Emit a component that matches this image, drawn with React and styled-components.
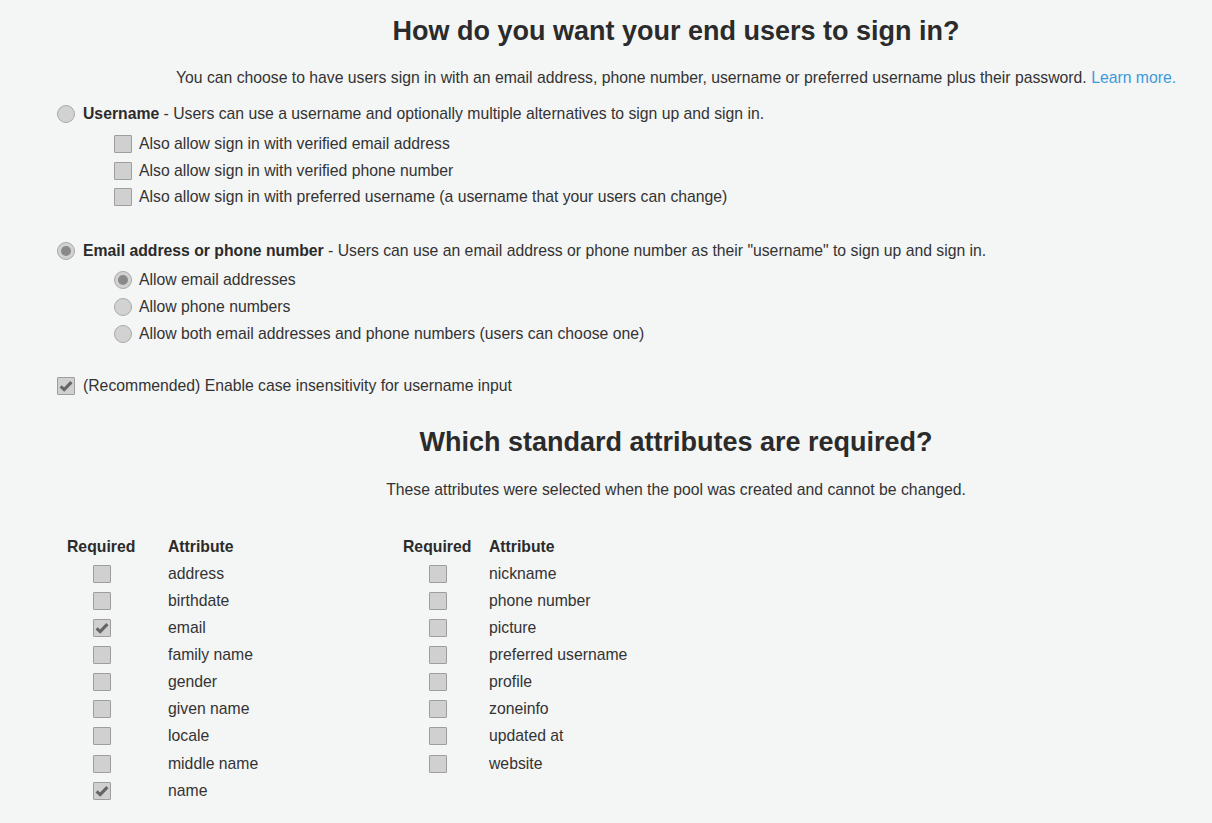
import React from "react";
import styled, { createGlobalStyle } from "styled-components";

const Global = createGlobalStyle`
  html, body { margin: 0; padding: 0; background: #f4f5f5; }
  body {
    font-family: "Liberation Sans", Arial, sans-serif;
    font-size: 15.75px;
    color: #333;
  }
`;

const Page = styled.div`
  padding-left: 57px;
  padding-bottom: 20px;
`;

const Centered = styled.div`
  padding-left: 83px;
  text-align: center;
`;

const Title = styled.h2`
  margin: ${(p) => p.$top}px 0 0;
  font-size: 27px;
  line-height: 30px;
  font-weight: bold;
  color: #2b2b2b;
`;

const Lead = styled.p`
  margin: ${(p) => p.$top}px 0 0;
  line-height: 20px;
  color: #333;
`;

const Link = styled.a`
  color: #3b9bdb;
  text-decoration: none;
`;

const OptionRow = styled.label`
  display: flex;
  align-items: center;
  gap: ${(p) => (p.$sub ? 7 : 8)}px;
  height: ${(p) => p.$h || 20}px;
  margin-top: ${(p) => p.$top || 0}px;
  padding-left: ${(p) => (p.$sub ? 57 : 0)}px;
  line-height: 20px;
  white-space: nowrap;
`;

const Strong = styled.b`
  font-weight: bold;
  color: #2b2b2b;
`;

const RadioBox = styled.span`
  width: 18px;
  height: 18px;
  flex: none;
  box-sizing: border-box;
  border-radius: 50%;
  background: #d2d2d2;
  border: 1px solid #a9a9a9;
  display: inline-flex;
  align-items: center;
  justify-content: center;
`;

const RadioDot = styled.span`
  width: 10px;
  height: 10px;
  border-radius: 50%;
  background: #898989;
`;

const CheckBox = styled.span`
  width: 18px;
  height: 18px;
  flex: none;
  box-sizing: border-box;
  background: #d0d0d0;
  border: 1px solid #9e9e9e;
  border-radius: 1px;
  display: inline-flex;
  align-items: center;
  justify-content: center;
`;

const Radio = ({ checked }) => (
  <RadioBox>{checked && <RadioDot />}</RadioBox>
);

const Check = ({ checked }) => (
  <CheckBox>
    {checked && (
      <svg width="16" height="16" viewBox="0 0 16 16">
        <path
          d="M2.6 8.4 L6.2 11.6 L13.4 4.2"
          fill="none"
          stroke="#666"
          strokeWidth="3.2"
          strokeLinejoin="miter"
        />
      </svg>
    )}
  </CheckBox>
);

const Tables = styled.div`
  display: flex;
  margin-top: 33px;
`;

const AttrTable = styled.div`
  display: grid;
  grid-template-columns: 69px ${(p) => p.$attrWidth}px;
  column-gap: ${(p) => p.$gap}px;
  grid-auto-rows: 27.125px;
  align-items: center;
  margin-left: ${(p) => p.$left}px;
`;

const HeadCell = styled.div`
  font-weight: bold;
  color: #2b2b2b;
  white-space: nowrap;
`;

const BoxCell = styled.div`
  display: flex;
  justify-content: center;
`;

const NameCell = styled.div`
  white-space: nowrap;
`;

const left = [
  ["address", false],
  ["birthdate", false],
  ["email", true],
  ["family name", false],
  ["gender", false],
  ["given name", false],
  ["locale", false],
  ["middle name", false],
  ["name", true],
];

const right = [
  ["nickname", false],
  ["phone number", false],
  ["picture", false],
  ["preferred username", false],
  ["profile", false],
  ["zoneinfo", false],
  ["updated at", false],
  ["website", false],
];

const Table = ({ rows, left: l, gap, attrWidth }) => (
  <AttrTable $left={l} $gap={gap} $attrWidth={attrWidth}>
    <HeadCell>Required</HeadCell>
    <HeadCell>Attribute</HeadCell>
    {rows.map(([name, checked]) => (
      <React.Fragment key={name}>
        <BoxCell>
          <Check checked={checked} />
        </BoxCell>
        <NameCell>{name}</NameCell>
      </React.Fragment>
    ))}
  </AttrTable>
);

export default function App() {
  return (
    <>
      <Global />
      <Page>
        <Centered>
          <Title $top={16}>How do you want your end users to sign in?</Title>
          <Lead $top={22}>
            You can choose to have users sign in with an email address, phone
            number, username or preferred username plus their password.{" "}
            <Link href="#">Learn more.</Link>
          </Lead>
        </Centered>

        <OptionRow $top={16}>
          <Radio />
          <span>
            <Strong>Username</Strong> - Users can use a username and optionally
            multiple alternatives to sign up and sign in.
          </span>
        </OptionRow>
        <OptionRow $sub $h={26.5} $top={6.75}>
          <Check />
          Also allow sign in with verified email address
        </OptionRow>
        <OptionRow $sub $h={26.5}>
          <Check />
          Also allow sign in with verified phone number
        </OptionRow>
        <OptionRow $sub $h={26.5}>
          <Check />
          Also allow sign in with preferred username (a username that your
          users can change)
        </OptionRow>

        <OptionRow $top={30.75}>
          <Radio checked />
          <span>
            <Strong>Email address or phone number</Strong> - Users can use an
            email address or phone number as their "username" to sign up and
            sign in.
          </span>
        </OptionRow>
        <OptionRow $sub $h={27} $top={5.5}>
          <Radio checked />
          Allow email addresses
        </OptionRow>
        <OptionRow $sub $h={27}>
          <Radio />
          Allow phone numbers
        </OptionRow>
        <OptionRow $sub $h={27}>
          <Radio />
          Allow both email addresses and phone numbers (users can choose one)
        </OptionRow>

        <OptionRow $top={28.5}>
          <Check checked />
          (Recommended) Enable case insensitivity for username input
        </OptionRow>

        <Centered>
          <Title $top={31}>Which standard attributes are required?</Title>
          <Lead $top={23}>
            These attributes were selected when the pool was created and cannot
            be changed.
          </Lead>
        </Centered>

        <Tables>
          <Table rows={left} left={10} gap={32} attrWidth={235} />
          <Table rows={right} left={0} gap={17} attrWidth={200} />
        </Tables>
      </Page>
    </>
  );
}
